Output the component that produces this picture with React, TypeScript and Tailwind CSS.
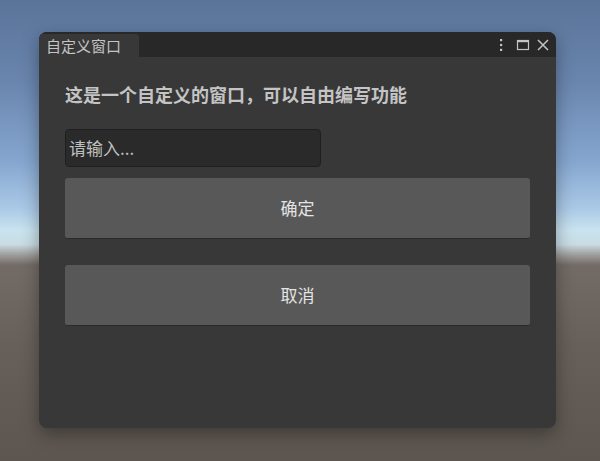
import React from "react";

const cjk = { fontFamily: '"Noto Sans CJK SC", "Noto Sans", sans-serif' };

export default function App() {
  return (
    <div
      className="w-[600px] h-[461px] overflow-hidden pt-[32px] pl-[39px] bg-[linear-gradient(to_bottom,#5a7399_0%,#6a86ae_18%,#86a6cf_35%,#a9c8e6_45%,#c9e3ef_50%,#c8dce3_53%,#9a9896_55.5%,#736b66_57.5%,#675f59_75%,#5d5650_100%)]"
      style={cjk}
    >
      <div className="w-[517px] h-[396px] rounded-[8px] bg-[#383838] overflow-hidden flex flex-col shadow-[0_6px_18px_rgba(0,0,0,0.35)]">
        {/* header */}
        <div className="h-[25px] bg-[#282828] flex items-end justify-between shrink-0">
          <div className="h-[23px] w-[100px] bg-[#383838] rounded-tr-[3px] pl-[7px] flex items-center text-[15px] leading-none text-[#c4c4c4]">
            自定义窗口
          </div>
          <div className="h-[25px] flex items-center pr-[6px]">
            <svg width="14" height="14" viewBox="0 0 14 14" className="mr-[8px]">
              <rect x="6" y="1" width="2.2" height="2.2" fill="#c4c4c4" />
              <rect x="6" y="5.9" width="2.2" height="2.2" fill="#c4c4c4" />
              <rect x="6" y="10.8" width="2.2" height="2.2" fill="#c4c4c4" />
            </svg>
            <svg width="14" height="14" viewBox="0 0 14 14">
              <rect x="1.5" y="2.5" width="11" height="9" fill="none" stroke="#c4c4c4" strokeWidth="1.2" />
              <rect x="1" y="2" width="12" height="2.2" fill="#c4c4c4" />
            </svg>
            <svg width="14" height="14" viewBox="0 0 14 14" className="ml-[6px]">
              <path d="M2 2 L12 12 M12 2 L2 12" stroke="#c4c4c4" strokeWidth="1.5" />
            </svg>
          </div>
        </div>
        {/* body */}
        <div className="flex flex-col px-[26px]">
          <div className="mt-[25px] h-[24px] leading-[24px] text-[18px] font-bold text-[#c4c4c4] whitespace-nowrap">
            这是一个自定义的窗口，可以自由编写功能
          </div>
          <div className="mt-[23px] w-[256px] h-[38px] rounded-[4px] bg-[#2a2a2a] border border-[#1f1f1f] flex items-center pl-[3px] text-[17px] text-[#c0c0c0]">
            请输入...
          </div>
          <button className="mt-[11px] h-[61px] w-full rounded-[3px] bg-[#585858] border-b border-[#2a2a2a] text-[17px] text-[#e4e4e4] flex items-center justify-center">
            确定
          </button>
          <button className="mt-[26px] h-[61px] w-full rounded-[3px] bg-[#585858] border-b border-[#2a2a2a] text-[17px] text-[#e4e4e4] flex items-center justify-center">
            取消
          </button>
        </div>
      </div>
    </div>
  );
}
